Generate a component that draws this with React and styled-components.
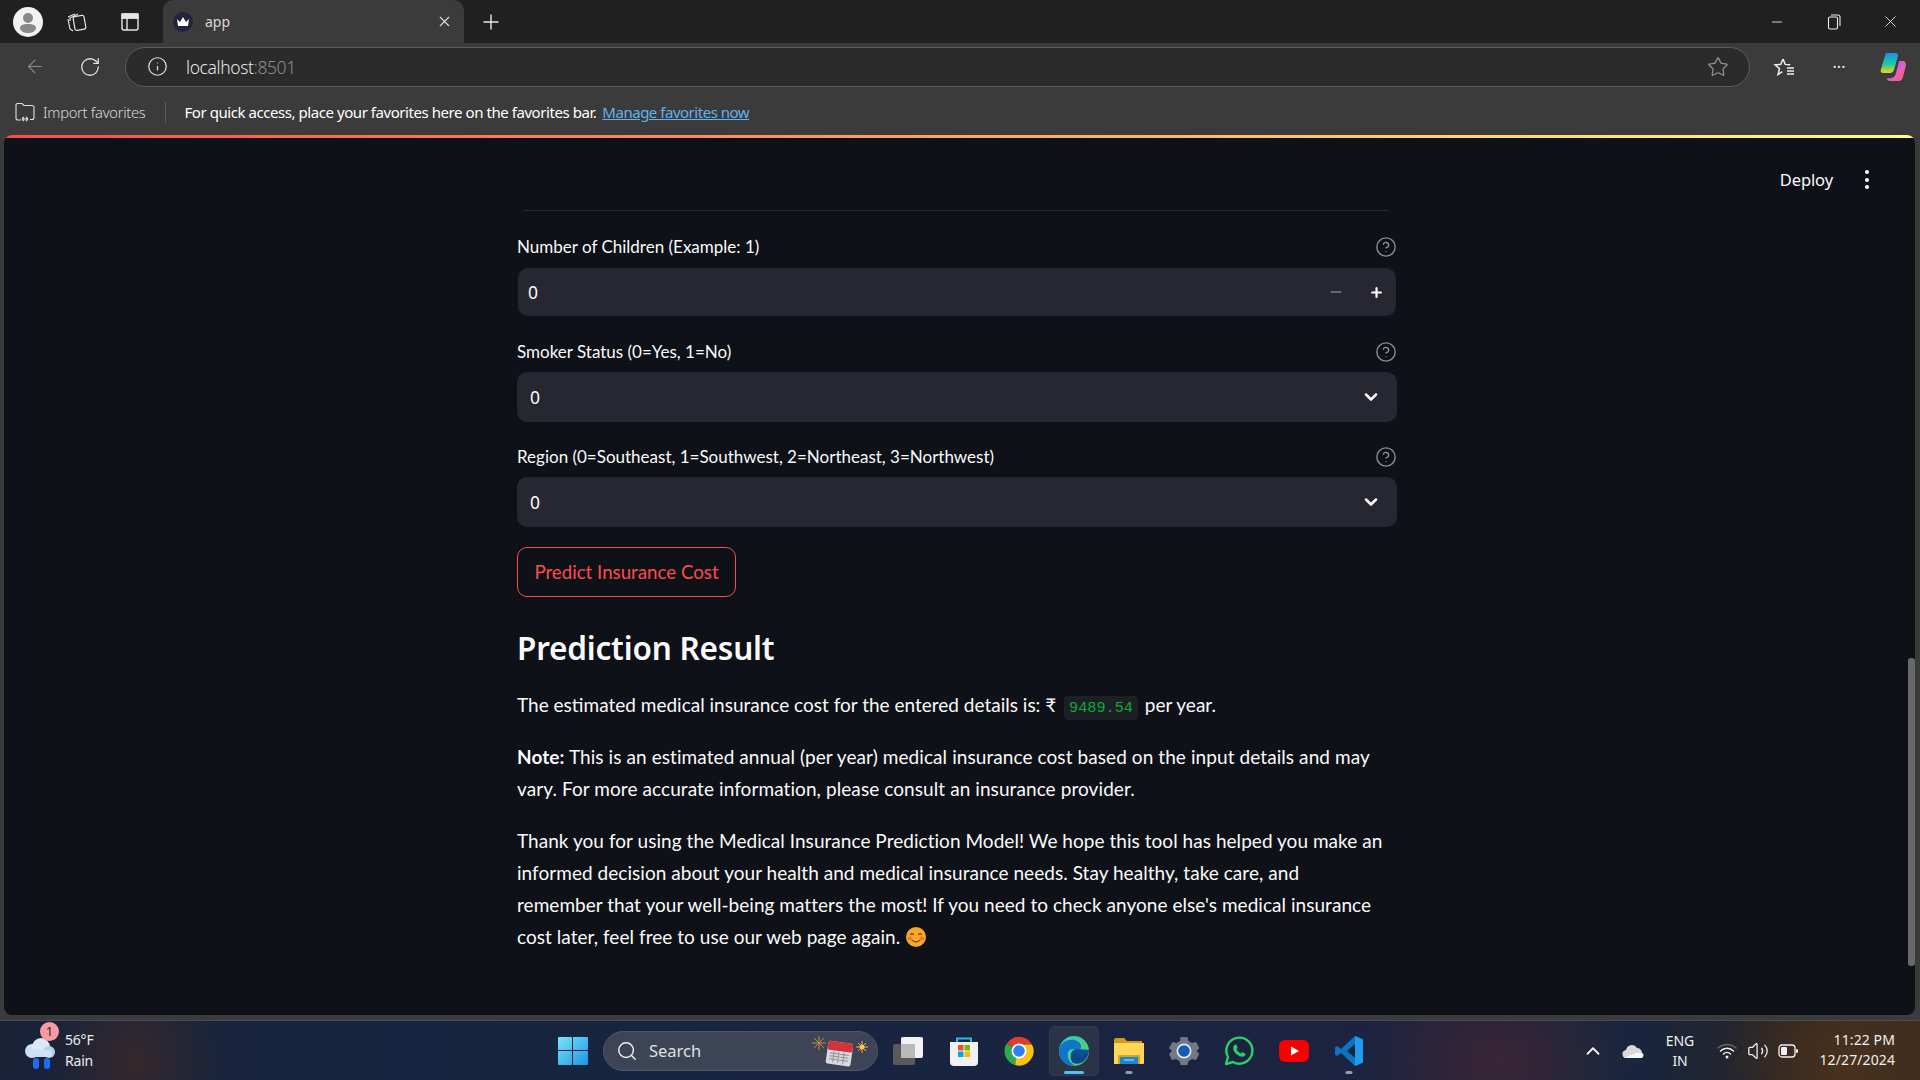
import React from 'react';
import styled, { createGlobalStyle } from 'styled-components';
import { ArrowLeft, RotateCw, Info, Star, Plus, X, Minus, CircleHelp, ChevronDown, ChevronUp, Search, Volume2 } from 'lucide-react';

const Global = createGlobalStyle`
  html, body { margin: 0; padding: 0; background: #3b3b3b; }
  #root { width: 1920px; height: 1080px; overflow: hidden; }
  * { box-sizing: border-box; }
`;
const Screen = styled.div`
  width: 1920px; height: 1080px; display: flex; flex-direction: column;
  background: #3b3b3b; font-family: "Noto Sans", sans-serif; color: #fff;
`;
const TabBar = styled.div`
  height: 43px; background: #202020; display: flex; align-items: center; flex: none;
`;
const Avatar = styled.div`
  width: 30px; height: 30px; border-radius: 50%; background: #f2f2f2; margin-left: 13px;
  display: flex; align-items: center; justify-content: center;
`;
const TabIconSlot = styled.div`
  width: 53px; display: flex; justify-content: center; align-items: center; color: #e4e4e4;
`;
const TabIcons = styled.div`
  display: flex; margin-left: 7px; width: 113px; flex: none;
`;
const ActiveTab = styled.div`
  width: 301px; height: 43px; background: #3b3b3b; border-radius: 10px 10px 0 0;
  display: flex; align-items: center; padding: 0 11px 0 10px; color: #ddd;
`;
const Favicon = styled.div`
  width: 20px; height: 20px; border-radius: 50%; background: #22253a;
  display: flex; align-items: center; justify-content: center; margin-right: 12px;
`;
const TabTitle = styled.span`
  font-size: 14px; flex: 1; color: #d8d8d8; margin-top: -1px;
`;
const NewTab = styled.div`
  margin-left: 15px; display: flex; color: #e8e8e8;
`;
const WindowControls = styled.div`
  margin-left: auto; display: flex; color: #ececec; padding-right: 1px;
`;
const WinBtn = styled.div`
  width: 57px; height: 43px; display: flex; align-items: center; justify-content: center;
`;
const Toolbar = styled.div`
  height: 47px; flex: none; display: flex; align-items: center; padding: 0 0 0 24px;
`;
const NavBtn = styled.div`
  width: 22px; display: flex; justify-content: center; color: ${p => p.$dim ? '#8a8a8a' : '#e0e0e0'};
  margin-right: ${p => p.$gap || 0}px;
`;
const UrlBar = styled.div`
  width: 1625px; flex: none; height: 40px; border: 1.5px solid #5c5c5c; border-radius: 20px; background: #2b2b2b;
  display: flex; align-items: center; padding: 0 20px 0 21px;
`;
const UrlText = styled.span`
  font-size: 17.5px; margin-left: 18px; color: #e6e6e6; flex: 1; letter-spacing: -0.4px; font-weight: 300;
`;
const UrlPort = styled.span`
  color: #8b8b8b;
`;
const ToolIcons = styled.div`
  display: flex; align-items: center; margin-left: 8px;
`;
const ToolSlot = styled.div`
  width: 54px; display: flex; justify-content: center; align-items: center; color: #eee;
`;
const FavBar = styled.div`
  height: 44px; margin-bottom: 1px; flex: none; display: flex; align-items: center; padding-left: 15px; font-size: 15px;
`;
const ImportText = styled.span`
  margin-left: 8px; color: #d8d8d8; font-weight: 300; font-size: 14.7px; letter-spacing: -0.28px;
`;
const FavSep = styled.div`
  width: 1px; height: 21px; background: #5e5e5e; margin: 0 18px 0 20px;
`;
const FavText = styled.span`
  color: #fff; letter-spacing: -0.44px;
`;
const FavLink = styled.a`
  margin-left: 6px; color: #62b2ee; text-decoration: underline; letter-spacing: -0.48px;
`;
const Main = styled.main`
  flex: 1; min-height: 0; margin: 0 5px 5px 4px; background: #0e1117; border-radius: 8px;
  position: relative; overflow: hidden; display: flex; justify-content: center; padding-right: 5px;
  font-family: Lato, "Noto Sans", sans-serif;
`;
const Decoration = styled.div`
  position: absolute; top: 0; left: 0; right: 0; height: 3px;
  background: linear-gradient(90deg, #ff4b4b, #fffd80);
`;
const Header = styled.div`
  position: absolute; top: 33px; right: 46px; display: flex; align-items: center; gap: 32px; font-size: 17.5px; color: #fafafa;
`;
const Deploy = styled.span`
  font-family: "Noto Sans", sans-serif; font-size: 16.5px; letter-spacing: -0.1px;
`;
const Kebab = styled.div`
  display: flex; flex-direction: column; gap: 3.6px;
`;
const KebabDot = styled.span`
  width: 4px; height: 4px; border-radius: 50%; background: #fafafa;
`;
const Scrollbar = styled.div`
  position: absolute; right: 0; top: 523px; width: 7px; height: 308px; background: #67686d; border-radius: 3px;
`;
const Column = styled.div`
  width: 880px; padding-top: 75px; display: flex; flex-direction: column; flex: none;
`;
const Divider = styled.hr`
  border: 0; height: 1px; background: #262730; margin: 0 0 23px 6px; width: 866px;
`;
const Field = styled.div`
  display: flex; flex-direction: column; margin-bottom: ${p => p.$mb}px;
`;
const LabelRow = styled.div`
  display: flex; align-items: center; justify-content: space-between; height: 25px; margin-bottom: ${p => p.$mb}px;
`;
const Label = styled.label`
  font-size: 17px; color: #fafafa; font-weight: 400;
`;
const Help = styled.div`
  display: flex; color: #8d8e93;
`;
const NumberBox = styled.div`
  height: 48px; background: #262730; border-radius: 10px; margin: 0 1px; display: flex; align-items: center; padding: 0 0 0 10px;
  font-size: 17.5px; color: #fafafa;
`;
const BoxValue = styled.span`
  flex: 1;
  font-family: "Noto Sans", sans-serif;
`;
const Stepper = styled.div`
  width: 40px; display: flex; justify-content: center; color: ${p => p.$dim ? '#7d7f89' : '#fafafa'};
`;
const SelectBox = styled.div`
  height: 50px; background: #262730; border-radius: 10px; display: flex; align-items: center; padding: 0 16px 0 13px;
  font-size: 17.5px; color: #fafafa;
`;
const PredictBtn = styled.button`
  align-self: flex-start; width: 219px; height: 50px; border: 1px solid #ff4b4b; border-radius: 10px; background: transparent; color: #ff4b4b;
  font-family: Lato, "Noto Sans", sans-serif; font-size: 18.7px; margin-top: 20px; padding: 0;
`;
const Heading = styled.h2`
  margin: 29px 0 0; font-size: 31.5px; line-height: 44px; font-weight: 600; color: #fafafa; letter-spacing: -0.2px;
  font-family: "Noto Sans", sans-serif;
`;
const Para = styled.p`
  margin: ${p => p.$mt}px 0 0; font-size: 19px; line-height: 32px; color: #fafafa; white-space: nowrap; letter-spacing: ${p => p.$ls || 0}px;
`;
const Code = styled.code`
  font-family: "Liberation Mono", monospace; font-size: 15.2px; line-height: 1; color: #09ab3b; background: rgba(250, 250, 250, 0.06); border-radius: 4px; padding: 3px 5px; margin: 0 2px 0 3px;
`;
const Taskbar = styled.footer`
  height: 60px; flex: none; display: flex; align-items: center; padding-left: 24px; border-top: 1px solid #4a4d55;
  background:
    radial-gradient(ellipse 90px 120px at 135px 40px, rgba(80,45,30,.5), transparent),
    radial-gradient(ellipse 140px 120px at 1500px 40px, rgba(95,40,40,.45), transparent),
    radial-gradient(ellipse 120px 120px at 1840px 40px, rgba(95,60,25,.55), transparent),
    linear-gradient(90deg, #1a2238 0%, #16253f 20%, #1a2440 55%, #1c2340 75%, #17253e 85%, #2e2420 95%, #3a2a20 100%);
`;
const Weather = styled.div`
  width: 534px; display: flex; align-items: center; flex: none; position: relative;
`;
const WeatherText = styled.div`
  margin-left: 9px; font-size: 14px; line-height: 21px; color: #ececec; letter-spacing: -0.2px; margin-top: -2px;
`;
const WeatherBadge = styled.span`
  position: absolute; left: 16px; top: -9px; width: 19px; height: 19px; border-radius: 50%; background: #f99aa2; color: #33202a;
  font-size: 13px; display: flex; align-items: center; justify-content: center;
`;
const StartBtn = styled.div`
  display: flex; margin-right: 15px;
`;
const SearchPill = styled.div`
  width: 275px; height: 40px; border-radius: 20px; background: #3c4455; border: 1px solid #4f5668; display: flex; align-items: center; padding: 0 6px 0 12px; color: #eee;
`;
const SearchText = styled.span`
  font-size: 16.5px; margin-left: 11px; flex: 1; color: #dfe0e2;
`;
const AppSlot = styled.div`
  width: 55px; height: 50px; display: flex; align-items: center; justify-content: center; position: relative; flex: none;
`;
const ActiveBox = styled.div`
  position: absolute; left: 2.5px; top: 0; width: 50px; height: 50px; background: #2b3447; border-radius: 5px; border: 1px solid #323a4d;
`;
const AppIcon = styled.div`
  position: relative; display: flex;
`;
const Indicator = styled.span`
  position: absolute; bottom: 2px; left: 50%; transform: translateX(-50%); height: 3px; border-radius: 2px;
  width: ${p => p.$active ? 20 : 7}px; background: ${p => p.$active ? '#4fc3f7' : '#9a9ca3'};
`;
const AppsRow = styled.div`
  display: flex; margin-left: 3px; align-items: center;
`;
const Tray = styled.div`
  margin-left: auto; display: flex; align-items: center; padding-right: 25px; color: #f0f0f0;
`;
const TraySlot = styled.div`
  width: ${p => p.$w}px; display: flex; justify-content: center; align-items: center;
`;
const Lang = styled.div`
  font-size: 14px; text-align: center; line-height: 19.5px; width: 44px; margin: 0 10px 0 5px; letter-spacing: -0.1px;
`;
const Clock = styled.div`
  font-size: 14px; text-align: right; line-height: 20px; margin-left: 14px; letter-spacing: 0.1px; width: 78px; white-space: nowrap; margin-top: -2px;
`;
const Emoji = styled.svg`
  vertical-align: -3px; margin-left: 1px;
`;

const Help16 = () => <Help><CircleHelp size={22} strokeWidth={1.5} /></Help>;
const Chevron = () => <ChevronDown size={20} strokeWidth={3} color="#fafafa" />;

const AvatarIcon = () => (
  <svg width="22" height="24" viewBox="0 0 22 24"><circle cx="11" cy="8" r="5" fill="#8a8a8a" /><path d="M3 18c0-3 3-4 8-4s8 1 8 4c0 3-4 5-8 5s-8-2-8-5z" fill="#8a8a8a" /></svg>
);
const CollectionsIcon = () => (
  <svg width="22" height="22" viewBox="0 0 22 22" fill="none" stroke="currentColor" strokeWidth="1.2"><path d="M2 6l7-3M4 10V7l8-4M7 20l-3-2-2-10" /><rect x="8" y="5" width="11" height="14" rx="2" transform="rotate(-10 13 12)" /></svg>
);
const VerticalTabs = () => (
  <svg width="20" height="20" viewBox="0 0 20 20" fill="none" stroke="currentColor" strokeWidth="1.4"><rect x="2" y="2" width="16" height="16" rx="2" /><path d="M2 6h16M7 6v12" /><path d="M2 2h16v4H2z" fill="currentColor" /></svg>
);
const Crown = () => (
  <svg width="14" height="12" viewBox="0 0 14 12"><path d="M1 3l3 3 3-5 3 5 3-3-1 7H2z" fill="#fff" /></svg>
);
const RestoreIcon = () => (
  <svg width="14" height="18" viewBox="0 0 14 18" fill="none" stroke="currentColor" strokeWidth="1.1"><rect x="1.5" y="4" width="9" height="12" rx="1.5" /><path d="M4 2h7a2 2 0 0 1 2 2v9" /></svg>
);
const FavStar = () => (
  <svg width="24" height="24" viewBox="0 0 24 24" fill="none" stroke="currentColor" strokeWidth="1.5"><path d="M10 4l2.2 5.4 5 .4M10 4L7.8 9.4l-5.6.4 4.3 3.8-1.5 6 4.3-3" /><path d="M14 13h7M14 16h7M14 19h7" /></svg>
);
const Copilot = () => (
  <svg width="28" height="30" viewBox="0 0 28 30">
    <defs>
      <linearGradient id="cpa" x1="0" y1="0" x2="0" y2="1"><stop offset="0" stopColor="#1b8ef0" /><stop offset=".55" stopColor="#22c8a0" /><stop offset="1" stopColor="#f2d31b" /></linearGradient>
      <linearGradient id="cpb" x1="0" y1="0" x2="1" y2="1"><stop offset="0" stopColor="#8a5cf0" /><stop offset=".6" stopColor="#e860c0" /><stop offset="1" stopColor="#f5603a" /></linearGradient>
    </defs>
    <path d="M8 1h9c1 0 2 1 2 3l-4 14c-.8 2-2 3-4 3H4c-2 0-3-2-2-4L6 4c.3-2 1-3 2-3z" fill="url(#cpa)" />
    <path d="M20 9h4c2 0 3 2 3 4l-3 12c-.5 2-2 4-4 4h-9c-2 0-3-1-3-3 0 0 4 1 7-1 2-2 2-5 3-8z" fill="url(#cpb)" />
  </svg>
);
const ImportIcon = () => (
  <svg width="20" height="20" viewBox="0 0 20 20" fill="none" stroke="#e0e0e0" strokeWidth="1.1"><path d="M6 18H3a2 2 0 0 1-2-2V3a1.500 1.500 0 0 1 1.500-1.500H7l2 2h8a2 2 0 0 1 2 2v10a2 2 0 0 1-2 2h-2" /><path d="M7 17h6M7 17l2-2M7 17l2 2M13 17l-2-2M13 17l-2 2" /></svg>
);
const WeatherIcon = () => (
  <svg width="32" height="38" viewBox="0 0 32 38">
    <circle cx="8" cy="19" r="7" fill="#cfe0f5" /><circle cx="17" cy="15" r="9" fill="#dbe8f8" /><circle cx="25" cy="20" r="6" fill="#b8cfee" />
    <rect x="6" y="18" width="22" height="7" rx="3" fill="#cfe0f5" />
    <rect x="9" y="26" width="6" height="11" rx="3" fill="#1f6df0" /><rect x="20" y="26" width="6" height="11" rx="3" fill="#1f6df0" />
  </svg>
);
const WinLogo = () => (
  <svg width="30" height="30" viewBox="0 0 30 30">
    <defs><linearGradient id="wl" x1="0" y1="0" x2="1" y2="1"><stop offset="0" stopColor="#7be4fb" /><stop offset="1" stopColor="#1795e6" /></linearGradient></defs>
    <path d="M1 1h13v13H0V2a1 1 0 0 1 1-1zM15 1h14a1 1 0 0 1 1 1v12H15zM0 15h14v14H1a1 1 0 0 1-1-1zM15 15h15v13a1 1 0 0 1-1 1H15z" fill="url(#wl)" />
  </svg>
);
const CalendarIcon = () => (
  <svg width="60" height="32" viewBox="0 0 60 32">
    <g stroke="#c98a44" strokeWidth="1"><path d="M8 1v14M1 8h14M3 3l10 10M13 3L3 13" /></g>
    <g stroke="#e8b040" strokeWidth="1"><path d="M51 6v12M45 12h12M47 8l8 8M55 8l-8 8" /></g>
    <circle cx="51" cy="12" r="2.500" fill="#ffc84a" />
    <g transform="rotate(8 28 18)"><rect x="16" y="7" width="25" height="23" rx="2" fill="#d9d9df" /><rect x="16" y="7" width="25" height="9" rx="2" fill="#d3333a" />
      <path d="M19 19h19M19 22h19M19 25h19M23 17v11M28 17v11M33 17v11" stroke="#8d8d94" strokeWidth="1" /></g>
  </svg>
);
const TaskView = () => (
  <svg width="32" height="30" viewBox="0 0 32 30">
    <rect x="0" y="8" width="22" height="21" rx="2" fill="#5a5a5d" /><rect x="8" y="1" width="22" height="21" rx="2" fill="#f2f2f4" /><rect x="8" y="8" width="14" height="14" fill="#b9b9bb" />
  </svg>
);
const StoreIcon = () => (
  <svg width="30" height="30" viewBox="0 0 30 30">
    <path d="M8 6V2.500h14V6" fill="none" stroke="#2fb5ee" strokeWidth="2" /><path d="M1 6h28v20a4 4 0 0 1-4 4H5a4 4 0 0 1-4-4z" fill="#f1f1f3" />
    <rect x="9" y="9" width="5.500" height="5.500" fill="#f25022" /><rect x="15.500" y="9" width="5.500" height="5.500" fill="#7fba00" /><rect x="9" y="15.500" width="5.500" height="5.500" fill="#00a4ef" /><rect x="15.500" y="15.500" width="5.500" height="5.500" fill="#ffb900" />
  </svg>
);
const ChromeIcon = () => (
  <svg width="30" height="30" viewBox="0 0 30 30">
    <path d="M15 15L3 7.500A14.500 14.500 0 0 1 28 8.500H15z" fill="#e33b2e" /><path d="M15 15L2.600 7.500A14.500 14.500 0 0 0 11 29z" fill="#2da94f" /><path d="M15 8.500h13A14.500 14.500 0 0 1 11 29z" fill="#fbc116" />
    <circle cx="15" cy="15" r="7.500" fill="#fff" /><circle cx="15" cy="15" r="5.800" fill="#2f7ff0" />
  </svg>
);
const EdgeIcon = () => (
  <svg width="30" height="30" viewBox="0 0 30 30">
    <defs><linearGradient id="eg" x1="0" y1="0" x2="1" y2="1"><stop offset="0" stopColor="#2bc6d8" /><stop offset="1" stopColor="#5ed34a" /></linearGradient></defs>
    <circle cx="15" cy="15" r="15" fill="url(#eg)" />
    <path d="M0 15C1 6 9 3 15 4c4 .6 8 4 7 8-1 2-6 1-8 1-5 .3-7 5-4 11 1 2 3 4 6 6C7 30 0 24 0 15z" fill="#1273c8" />
    <path d="M12 19c0-4 3-6 6-6 3 0 9 1 12 1 0 3-1 7-4 10-3 3-7 4-11 3-2-1-4-4-3-8z" fill="#0f4f9a" />
    <path d="M19 20c2 1 5 1 7-1l3-2c-1 4-3 8-7 10-3 1-6 1-8 0-2-2-2-5-1-7 2-3 5-3 6 0z" fill="#0e3d80" opacity=".6" />
  </svg>
);
const FolderIcon = () => (
  <svg width="30" height="28" viewBox="0 0 30 28">
    <path d="M0 3a2 2 0 0 1 2-2h8l3 3h15v23H0z" fill="#d59a1d" /><path d="M0 6h30v20a1 1 0 0 1-1 1H1a1 1 0 0 1-1-1z" fill="#fdd65a" /><path d="M5 18h20a1 1 0 0 1 1 1v8H4v-8a1 1 0 0 1 1-1z" fill="#d9a21e" /><path d="M6 20h18v7H6z" fill="#1c86d0" /><path d="M10 23h10" stroke="#bfe2ff" />
  </svg>
);
const GearIcon = () => (
  <svg width="30" height="30" viewBox="0 0 30 30">
    <path d="M11.500 1h7l1 4 3.500 2 4-1 3.500 6-3 3v0l3 3-3.500 6-4-1-3.500 2-1 4h-7l-1-4-3.500-2-4 1L0 18l3-3-3-3 3.500-6 4 1 3.500-2z" fill="#727986" />
    <circle cx="15" cy="15" r="7.500" fill="#e6e8ee" /><circle cx="15" cy="15" r="5.800" fill="#0f5fb4" />
  </svg>
);
const WhatsAppIcon = () => (
  <svg width="30" height="30" viewBox="0 0 30 30" fill="none">
    <path d="M2 28l2-7a13 13 0 1 1 5 5z" stroke="#25d366" strokeWidth="2.400" strokeLinejoin="round" />
    <path d="M10.500 9c1-1 2-.5 2.300.5l.7 1.700c.2.600-.5 1.300-1 2 .9 2 2.500 3.400 4.400 4.200.7-.5 1.300-1.300 2-1l1.800.9c.9.500 1 1.400.3 2.300-1.300 1.500-3.400 1.500-5.600.4-3-1.400-5-3.600-6-6.300-.5-1.800 0-3.600 1.100-4.700z" fill="#25d366" />
  </svg>
);
const YouTubeIcon = () => (
  <svg width="30" height="22" viewBox="0 0 30 22"><rect width="30" height="22" rx="6" fill="#f70000" /><path d="M12 6.500l8 4.500-8 4.500z" fill="#fff" /></svg>
);
const VSCodeIcon = () => (
  <svg width="28" height="30" viewBox="0 0 28 30">
    <path d="M20 0l8 3.500v23L20 30 6 17l-4 3-2-1.500V11.500L2 10l4 3z" fill="#0d75c0" />
    <path d="M20 0l8 3.500v23L20 30z" fill="#1f9cf0" /><path d="M20 8l-8 7 8 7z" fill="#12243f" />
  </svg>
);
const OneDrive = () => (
  <svg width="22" height="14" viewBox="0 0 22 14"><path d="M5 14a4 4 0 0 1-1-8 6 6 0 0 1 11-2 5 5 0 0 1 5 5c2 0 2 5-1 5z" fill="#d9d9d9" /><path d="M3 14h16c3 0 3-5 0-5-4-1-9 1-16 5z" fill="#f7f7f7" /></svg>
);
const WifiIcon = () => (
  <svg width="20" height="16" viewBox="0 0 20 16" fill="none" strokeWidth="1.500" strokeLinecap="round"><path d="M1 5a13 13 0 0 1 18 0" stroke="#6d6660" /><path d="M3.500 8a9 9 0 0 1 13 0M6.500 11a5 5 0 0 1 7 0" stroke="#f0f0f0" /><circle cx="10" cy="14" r="1.500" fill="#f0f0f0" /></svg>
);
const BatteryIcon = () => (
  <svg width="20" height="14" viewBox="0 0 20 14" fill="none"><rect x="1" y="1" width="16" height="12" rx="3" stroke="#f0f0f0" strokeWidth="1.300" /><rect x="3" y="3" width="6" height="8" rx="1" fill="#f0f0f0" /><rect x="18" y="5" width="2" height="4" rx="1" fill="#f0f0f0" /></svg>
);
const SmileEmoji = () => (
  <Emoji width="20" height="20" viewBox="0 0 20 20">
    <circle cx="10" cy="10" r="10" fill="#f9a825" />
    <ellipse cx="4" cy="11.500" rx="2.500" ry="2" fill="#f0653a" opacity=".8" /><ellipse cx="16" cy="11.500" rx="2.500" ry="2" fill="#f0653a" opacity=".8" />
    <path d="M4.500 8c.5-2 2.500-2 3 0M12.500 8c.5-2 2.500-2 3 0M6 13c2 2.500 6 2.500 8 0" fill="none" stroke="#5c3a10" strokeWidth="1.200" />
  </Emoji>
);

const apps = [
  { key: 'tv', Icon: TaskView }, { key: 'st', Icon: StoreIcon }, { key: 'ch', Icon: ChromeIcon },
  { key: 'ed', Icon: EdgeIcon, active: true }, { key: 'fo', Icon: FolderIcon, dot: true }, { key: 'ge', Icon: GearIcon },
  { key: 'wa', Icon: WhatsAppIcon }, { key: 'yt', Icon: YouTubeIcon }, { key: 'vs', Icon: VSCodeIcon, dot: true },
];

export default function App() {
  return (
    <Screen>
      <Global />
      <TabBar>
        <Avatar><AvatarIcon /></Avatar>
        <TabIcons>
          <TabIconSlot><CollectionsIcon /></TabIconSlot>
          <TabIconSlot><VerticalTabs /></TabIconSlot>
        </TabIcons>
        <ActiveTab>
          <Favicon><Crown /></Favicon>
          <TabTitle>app</TabTitle>
          <X size={17} strokeWidth={1.5} />
        </ActiveTab>
        <NewTab><Plus size={24} strokeWidth={1.4} /></NewTab>
        <WindowControls>
          <WinBtn><Minus size={16} strokeWidth={1.3} /></WinBtn>
          <WinBtn><RestoreIcon /></WinBtn>
          <WinBtn><X size={19} strokeWidth={1.1} /></WinBtn>
        </WindowControls>
      </TabBar>
      <Toolbar>
        <NavBtn $dim $gap={33}><ArrowLeft size={23} strokeWidth={1.3} /></NavBtn>
        <NavBtn $gap={24}><RotateCw size={22} strokeWidth={1.4} /></NavBtn>
        <UrlBar>
          <Info size={21} strokeWidth={1.4} color="#e0e0e0" />
          <UrlText>localhost<UrlPort>:8501</UrlPort></UrlText>
          <Star size={22} strokeWidth={1.4} color="#8f8f8f" />
        </UrlBar>
        <ToolIcons>
          <ToolSlot><FavStar /></ToolSlot>
          <ToolSlot>···</ToolSlot>
          <ToolSlot><Copilot /></ToolSlot>
        </ToolIcons>
      </Toolbar>
      <FavBar>
        <ImportIcon />
        <ImportText>Import favorites</ImportText>
        <FavSep />
        <FavText>For quick access, place your favorites here on the favorites bar.</FavText>
        <FavLink>Manage favorites now</FavLink>
      </FavBar>
      <Main>
        <Decoration />
        <Header>
          <Deploy>Deploy</Deploy>
          <Kebab><KebabDot /><KebabDot /><KebabDot /></Kebab>
        </Header>
        <Scrollbar />
        <Column>
          <Divider />
          <Field $mb={23}>
            <LabelRow $mb={9}><Label>Number of Children (Example: 1)</Label><Help16 /></LabelRow>
            <NumberBox>
              <BoxValue>0</BoxValue>
              <Stepper $dim><Minus size={16} strokeWidth={2.4} /></Stepper>
              <Stepper><Plus size={15} strokeWidth={3.5} /></Stepper>
            </NumberBox>
          </Field>
          <Field $mb={22}>
            <LabelRow $mb={8}><Label>Smoker Status (0=Yes, 1=No)</Label><Help16 /></LabelRow>
            <SelectBox><BoxValue>0</BoxValue><Chevron /></SelectBox>
          </Field>
          <Field $mb={0}>
            <LabelRow $mb={8}><Label>Region (0=Southeast, 1=Southwest, 2=Northeast, 3=Northwest)</Label><Help16 /></LabelRow>
            <SelectBox><BoxValue>0</BoxValue><Chevron /></SelectBox>
          </Field>
          <PredictBtn>Predict Insurance Cost</PredictBtn>
          <Heading>Prediction Result</Heading>
          <Para $mt={19}>The estimated medical insurance cost for the entered details is: ₹ <Code>9489.54</Code> per year.</Para>
          <Para $mt={20} $ls={0.08}><strong>Note:</strong> This is an estimated annual (per year) medical insurance cost based on the input details and may<br />vary. For more accurate information, please consult an insurance provider.</Para>
          <Para $mt={20} $ls={0.04}>Thank you for using the Medical Insurance Prediction Model! We hope this tool has helped you make an<br />informed decision about your health and medical insurance needs. Stay healthy, take care, and<br />remember that your well-being matters the most! If you need to check anyone else's medical insurance<br />cost later, feel free to use our web page again. <SmileEmoji /></Para>
        </Column>
      </Main>
      <Taskbar>
        <Weather>
          <WeatherIcon />
          <WeatherBadge>1</WeatherBadge>
          <WeatherText>56°F<br />Rain</WeatherText>
        </Weather>
        <StartBtn><WinLogo /></StartBtn>
        <SearchPill>
          <Search size={22} strokeWidth={1.6} />
          <SearchText>Search</SearchText>
          <CalendarIcon />
        </SearchPill>
        <AppsRow>
          {apps.map(({ key, Icon, active, dot }) => (
            <AppSlot key={key}>
              {active && <ActiveBox />}
              <AppIcon><Icon /></AppIcon>
              {(active || dot) && <Indicator $active={active} />}
            </AppSlot>
          ))}
        </AppsRow>
        <Tray>
          <TraySlot $w={40}><ChevronUp size={22} strokeWidth={2} /></TraySlot>
          <TraySlot $w={40}><OneDrive /></TraySlot>
          <Lang>ENG<br />IN</Lang>
          <TraySlot $w={30}><WifiIcon /></TraySlot>
          <TraySlot $w={31}><Volume2 size={22} strokeWidth={1.4} /></TraySlot>
          <TraySlot $w={30}><BatteryIcon /></TraySlot>
          <Clock>11:22 PM<br />12/27/2024</Clock>
        </Tray>
      </Taskbar>
    </Screen>
  );
}
